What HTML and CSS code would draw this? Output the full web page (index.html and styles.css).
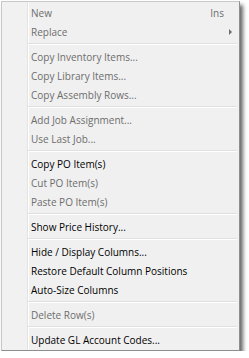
FILE: index.html
```html
<!DOCTYPE html>
<html lang="en">
<head>
  <meta charset="UTF-8" />
  <title>PO Items - Context Menu</title>
  <link rel="stylesheet" href="styles.css">
</head>
<body>

  <ul class="menu">
    <li class="item disabled"><span>New</span><span class="key">Ins</span></li>
    <li class="item disabled"><span>Replace</span><span class="arrow"></span></li>
    <li class="sep"></li>
    <li class="item disabled"><span>Copy Inventory Items...</span></li>
    <li class="item disabled"><span>Copy Library Items...</span></li>
    <li class="item disabled"><span>Copy Assembly Rows...</span></li>
    <li class="sep"></li>
    <li class="item disabled"><span>Add Job Assignment...</span></li>
    <li class="item disabled"><span>Use Last Job...</span></li>
    <li class="sep"></li>
    <li class="item"><span>Copy PO Item(s)</span></li>
    <li class="item disabled"><span>Cut PO Item(s)</span></li>
    <li class="item disabled"><span>Paste PO Item(s)</span></li>
    <li class="sep"></li>
    <li class="item"><span>Show Price History...</span></li>
    <li class="sep"></li>
    <li class="item"><span>Hide / Display Columns...</span></li>
    <li class="item"><span>Restore Default Column Positions</span></li>
    <li class="item"><span>Auto-Size Columns</span></li>
    <li class="sep"></li>
    <li class="item disabled"><span>Delete Row(s)</span></li>
    <li class="sep"></li>
    <li class="item"><span>Update GL Account Codes...</span></li>
  </ul>

</body>
</html>
```

FILE: styles.css
```css
* {
  margin: 0;
  padding: 0;
  box-sizing: border-box;
}

body {
  background: #fff;
  font-family: 'Open Sans', 'Liberation Sans', sans-serif;
  font-size: 10px;
}

.menu {
  list-style: none;
  width: 239px;
  margin: 1px 0 0 1px;
  padding: 1px 0;
  border: 1px solid #c8c8c8;
  border-right-color: #8e8e8e;
  border-bottom-color: #8e8e8e;
  background: linear-gradient(to right, #f1f1f1 25px, #e2e3e3 25px 26px, #fff 26px 27px, #f0f0f0 27px);
  box-shadow: 3px 4px 4px rgba(0, 0, 0, 0.6);
  color: #000;
}

.item {
  display: flex;
  align-items: center;
  justify-content: space-between;
  height: 19px;
  padding: 0 15px 0 29px;
}

.item.disabled {
  color: #6d6d6d;
}

.arrow {
  width: 0;
  height: 0;
  margin-right: -8px;
  border-top: 3px solid transparent;
  border-bottom: 3px solid transparent;
  border-left: 3px solid #6d6d6d;
}

.sep {
  height: 6px;
  margin: 0 2px 0 26px;
  display: flex;
  flex-direction: column;
  justify-content: center;
}

.sep::before {
  content: "";
  display: block;
  height: 1px;
  background: #e0e0e0;
  border-bottom: 1px solid #fff;
  box-sizing: content-box;
}
```
